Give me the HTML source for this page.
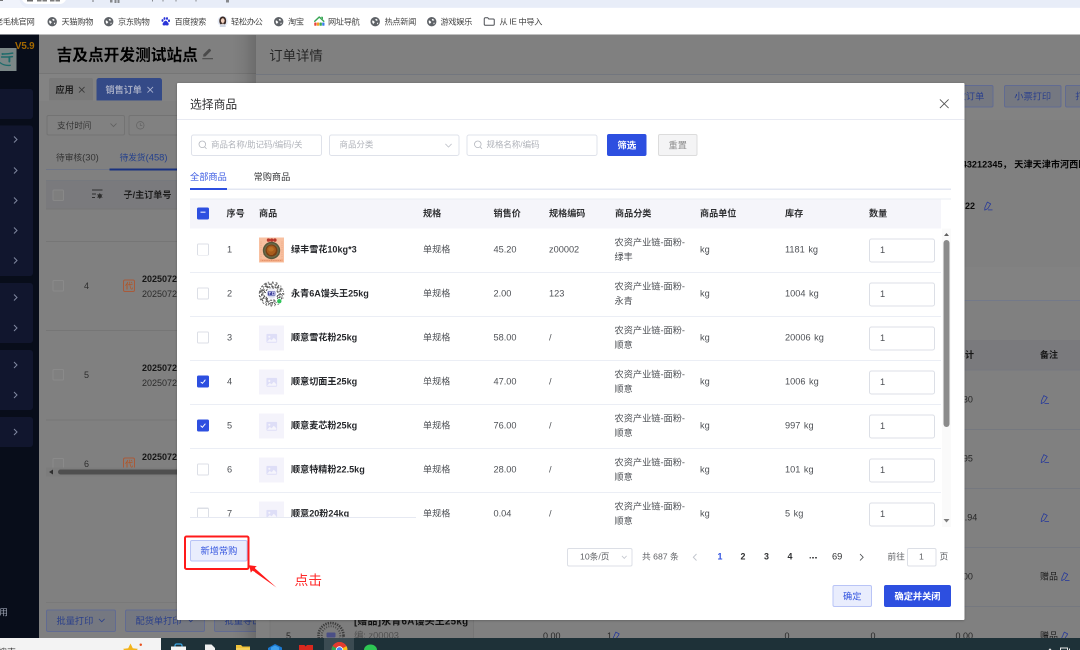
<!DOCTYPE html>
<html lang="zh-CN">
<head>
<meta charset="utf-8">
<title>选择商品</title>
<style>
*{box-sizing:border-box;margin:0;padding:0}
html,body{width:1080px;height:650px;overflow:hidden}
body{position:relative;background:#808080;font-family:"Liberation Sans","Noto Sans CJK SC",sans-serif;font-size:9px;color:#1a1a1a;line-height:1}
.a{position:absolute}
.t{position:absolute;white-space:nowrap;line-height:12px;height:12px}
.b{font-weight:bold}
svg{position:absolute;overflow:visible}
#sc{position:absolute;left:0;top:0;width:2160px;height:1300px;transform:scale(.5);transform-origin:0 0;will-change:transform;overflow:hidden}
#pg{position:absolute;left:0;top:0;width:1080px;height:650px;zoom:2;overflow:hidden;background:#808080}

/* ---------- browser chrome ---------- */
#addr{left:0;top:0;width:1080px;height:8px;background:#f0f3fb;overflow:hidden}
#addr .bar{left:19.500px;top:-12px;width:1100px;height:19.300px;border-radius:9px;background:#e8edf8}
#addr .pill{left:21.500px;top:-10px;width:45px;height:14.200px;border-radius:7px;background:#fff}
#bm{left:0;top:8px;width:1080px;height:26.700px;background:#fff}
#bm .t{font-size:8.200px;color:#444;top:7.600px;letter-spacing:-0.3px}
.globe{position:absolute;top:8px;width:9px;height:9px;border-radius:50%;background:#5f6368}

/* ---------- sidebar ---------- */
#side{left:0;top:35px;width:39px;height:603px;background:#080d1a}
#side::before{content:"";position:absolute;left:0;top:-.3px;width:39px;height:.4px;background:#080d1a}
#side .blk{position:absolute;left:0;width:33px;background:#11162e;border-radius:0 3px 3px 0}
#side .chev{position:absolute;left:13px;width:5px;height:8px}

/* ---------- left panel ---------- */
#lp{left:39px;top:35px;width:217px;height:603px;background:#808080;overflow:hidden}

/* ---------- drawer ---------- */
#dr{left:256px;top:35px;width:824px;height:603px;background:#808080;overflow:hidden}
#drsh{left:232px;top:35px;width:24px;height:603px;background:linear-gradient(90deg,rgba(0,0,0,0) 0%,rgba(0,0,0,.05) 50%,rgba(0,0,0,.16) 100%)}

/* ---------- dialog ---------- */
#dlg{left:177px;top:83px;width:787.500px;height:537px;background:#fff;border-radius:1px;box-shadow:0 .5px 2.500px rgba(0,0,0,.28);overflow:hidden}
#dlg .t{color:#333}

/* ---------- taskbar ---------- */
#tb{left:0;top:638px;width:1080px;height:12px;background:#1e3138;overflow:hidden}
</style>
</head>
<body>
<div id="sc"><div id="pg">
<div id="addr" class="a"><div class="a bar"></div><div class="a pill"></div><div class="a" style="left:0px;top:0;width:3px;height:1.2px;background:#555;opacity:0.8"></div><div class="a" style="left:27px;top:0;width:6px;height:1.5px;background:#3a3a3a;opacity:0.75"></div><div class="a" style="left:37px;top:0;width:4.5px;height:1.5px;background:#444;opacity:0.7"></div><div class="a" style="left:42.5px;top:0;width:4.5px;height:1.5px;background:#444;opacity:0.7"></div><div class="a" style="left:50px;top:0;width:4.5px;height:1.5px;background:#444;opacity:0.7"></div><div class="a" style="left:55.5px;top:0;width:4.5px;height:1.5px;background:#444;opacity:0.7"></div><div class="a" style="left:92.5px;top:0;width:1px;height:2.2px;background:#444;opacity:0.7"></div><div class="a" style="left:110px;top:0;width:2.5px;height:2.5px;background:#444;opacity:0.6"></div><div class="a" style="left:114.5px;top:0;width:2px;height:2.8px;background:#444;opacity:0.6"></div><div class="a" style="left:117.5px;top:0;width:2px;height:2.8px;background:#444;opacity:0.6"></div><div class="a" style="left:152px;top:0;width:1px;height:1.6px;background:#444;opacity:0.6"></div><div class="a" style="left:162.5px;top:0;width:1px;height:1.6px;background:#444;opacity:0.6"></div><div class="a" style="left:175.5px;top:0;width:1px;height:1.6px;background:#444;opacity:0.6"></div><div class="a" style="left:195.5px;top:0;width:1px;height:1.6px;background:#444;opacity:0.6"></div><div class="a" style="left:226px;top:0;width:3px;height:2.6px;background:#444;opacity:0.6"></div></div>
<div id="bm" class="a">
<div class="t" style="left:-5px">老毛桃官网</div>
<svg style="left:47.5px;top:9px" width="9.4" height="9.4" viewBox="0 0 20 20"><circle cx="10" cy="10" r="10" fill="#5f6368"/><path d="M4 7.400c1.300-.2 2.300.3 2.800 1.200.6 1.100 1.900 1 2.100 2.200.2 1.200-1.100 1.700-1.800 2.500-.4.500-.3 1.300-.9 1.500-1.400-.9-2.500-2.800-2.600-4.900 0-.9.100-1.700.4-2.500zM11.500 4c1.800.3 3.300 1.300 4.200 2.900-.8.300-1.400.1-2 .7-.7.600-1.600.5-2.200-.2-.5-.6-1.400-.8-1.300-1.700.1-.8.800-1.200 1.300-1.700zM14.200 12.300c.8-.3 1.700-.1 2.400.3-.3 1.300-1.100 2.300-2.200 3-.4-.6-.2-1.400-.6-2-.3-.5-.1-1.100.4-1.300z" fill="#fff"/></svg>
<div class="t" style="left:61.5px">天猫购物</div>
<svg style="left:104px;top:9px" width="9.4" height="9.4" viewBox="0 0 20 20"><circle cx="10" cy="10" r="10" fill="#5f6368"/><path d="M4 7.400c1.300-.2 2.300.3 2.800 1.200.6 1.100 1.900 1 2.100 2.200.2 1.200-1.100 1.700-1.800 2.500-.4.500-.3 1.300-.9 1.500-1.400-.9-2.500-2.800-2.600-4.900 0-.9.100-1.700.4-2.500zM11.500 4c1.800.3 3.300 1.300 4.200 2.900-.8.300-1.400.1-2 .7-.7.600-1.600.5-2.200-.2-.5-.6-1.400-.8-1.300-1.700.1-.8.800-1.200 1.300-1.700zM14.200 12.300c.8-.3 1.700-.1 2.400.3-.3 1.300-1.100 2.300-2.200 3-.4-.6-.2-1.400-.6-2-.3-.5-.1-1.100.4-1.300z" fill="#fff"/></svg>
<div class="t" style="left:118px">京东购物</div>
<svg style="left:160.5px;top:8.5px" width="10" height="10" viewBox="0 0 20 20" fill="#2a34d8"><ellipse cx="4" cy="8" rx="2" ry="2.800"/><ellipse cx="8" cy="4" rx="2" ry="2.800"/><ellipse cx="13" cy="4" rx="2" ry="2.800"/><ellipse cx="17" cy="8.500" rx="2" ry="2.800"/><path d="M10.300 8.500c2.200 0 3 2.200 5 4 1.800 1.700 1.500 5.500-1.800 5.500-1.400 0-2.200-.5-3.200-.5s-2 .5-3.300.5c-3.300 0-3.500-3.800-1.700-5.500 2-1.800 2.800-4 5-4z"/></svg>
<div class="t" style="left:174.5px">百度搜索</div>
<svg style="left:217.500px;top:7.500px" width="10.500" height="11.500" viewBox="0 0 21 23"><circle cx="10.500" cy="11.500" r="10.500" fill="#e6ecf7"/><path d="M4 14c-1.500-7 1.500-12 6.500-12s8 5 6.500 12c-.5 2.500-2 4-3 4h-7c-1 0-2.500-1.500-3-4z" fill="#3b2a25"/><ellipse cx="10.500" cy="10.300" rx="3.700" ry="4.800" fill="#f3d2bf"/><path d="M4.500 23c0-4.500 2.500-6.500 6-6.500s6 2 6 6.500z" fill="#cfd6e2"/><path d="M8.800 16.300h3.400l-1.700 3z" fill="#f3d2bf"/></svg>
<div class="t" style="left:231px">轻松办公</div>
<svg style="left:274px;top:9px" width="9.4" height="9.4" viewBox="0 0 20 20"><circle cx="10" cy="10" r="10" fill="#5f6368"/><path d="M4 7.400c1.300-.2 2.300.3 2.800 1.200.6 1.100 1.900 1 2.100 2.200.2 1.200-1.100 1.700-1.800 2.500-.4.500-.3 1.300-.9 1.500-1.400-.9-2.500-2.800-2.600-4.900 0-.9.100-1.700.4-2.500zM11.500 4c1.800.3 3.300 1.300 4.200 2.900-.8.300-1.400.1-2 .7-.7.600-1.600.5-2.200-.2-.5-.6-1.400-.8-1.300-1.700.1-.8.800-1.200 1.300-1.700zM14.200 12.300c.8-.3 1.700-.1 2.400.3-.3 1.300-1.100 2.300-2.200 3-.4-.6-.2-1.400-.6-2-.3-.5-.1-1.100.4-1.300z" fill="#fff"/></svg>
<div class="t" style="left:288px">淘宝</div>
<svg style="left:313.500px;top:7.500px" width="11.500" height="11.500" viewBox="0 0 23 23" fill="none" stroke-linecap="round" stroke-linejoin="round"><path d="M2.500 11.500L11.500 3l9 8.500" stroke="#3aa757" stroke-width="3"/><path d="M15.500 3.500h2.500v3" stroke="#3aa757" stroke-width="2"/><rect x="1.500" y="14" width="4.600" height="6.500" rx="1.200" fill="#e8453c"/><rect x="6.800" y="14" width="4.600" height="6.500" rx="1.200" fill="#f4a020"/><rect x="12.100" y="14" width="4.600" height="6.500" rx="1.200" fill="#35a853"/><rect x="17.400" y="14" width="4.600" height="6.500" rx="1.200" fill="#3b7ded"/></svg>
<div class="t" style="left:328px">网址导航</div>
<svg style="left:370.5px;top:9px" width="9.4" height="9.4" viewBox="0 0 20 20"><circle cx="10" cy="10" r="10" fill="#5f6368"/><path d="M4 7.400c1.300-.2 2.300.3 2.800 1.200.6 1.100 1.900 1 2.100 2.200.2 1.200-1.100 1.700-1.800 2.500-.4.500-.3 1.300-.9 1.500-1.400-.9-2.500-2.800-2.600-4.900 0-.9.100-1.700.4-2.500zM11.500 4c1.800.3 3.300 1.300 4.200 2.900-.8.300-1.400.1-2 .7-.7.600-1.600.5-2.200-.2-.5-.6-1.400-.8-1.300-1.700.1-.8.800-1.200 1.300-1.700zM14.200 12.300c.8-.3 1.700-.1 2.400.3-.3 1.300-1.100 2.300-2.200 3-.4-.6-.2-1.400-.6-2-.3-.5-.1-1.100.4-1.300z" fill="#fff"/></svg>
<div class="t" style="left:384.5px">热点新闻</div>
<svg style="left:427px;top:9px" width="9.4" height="9.4" viewBox="0 0 20 20"><circle cx="10" cy="10" r="10" fill="#5f6368"/><path d="M4 7.400c1.300-.2 2.300.3 2.800 1.200.6 1.100 1.900 1 2.100 2.200.2 1.200-1.100 1.700-1.800 2.500-.4.500-.3 1.300-.9 1.500-1.400-.9-2.500-2.800-2.600-4.900 0-.9.100-1.700.4-2.500zM11.500 4c1.800.3 3.300 1.300 4.200 2.900-.8.300-1.400.1-2 .7-.7.600-1.600.5-2.200-.2-.5-.6-1.400-.8-1.300-1.700.1-.8.800-1.200 1.300-1.700zM14.200 12.300c.8-.3 1.700-.1 2.400.3-.3 1.300-1.100 2.300-2.200 3-.4-.6-.2-1.400-.6-2-.3-.5-.1-1.100.4-1.300z" fill="#fff"/></svg>
<div class="t" style="left:440.5px">游戏娱乐</div>
<svg style="left:483.500px;top:9px" width="11.500" height="9" viewBox="0 0 23 18" fill="none" stroke="#4a4d52" stroke-width="2"><path d="M1.500 3.500a2 2 0 0 1 2-2h5l2 2.500h9a2 2 0 0 1 2 2v8.500a2 2 0 0 1-2 2h-16a2 2 0 0 1-2-2z"/></svg>
<div class="t" style="left:499.5px">从 IE 中导入</div>
</div>
<div id="side" class="a">
<div class="blk" style="top:54px;height:30px"></div>
<div class="blk" style="top:90.5px;height:150.5px"></div>
<div class="blk" style="top:248px;height:60px"></div>
<div class="blk" style="top:315px;height:60px"></div>
<div class="blk" style="top:382px;height:30px"></div>
<svg class="chev" style="left:13px;top:100.5px" width="5" height="7" viewBox="0 0 5 7" fill="none" stroke="#8088a0" stroke-width="1"><path d="M1 .5l3 3-3 3"/></svg>
<svg class="chev" style="left:13px;top:131.5px" width="5" height="7" viewBox="0 0 5 7" fill="none" stroke="#8088a0" stroke-width="1"><path d="M1 .5l3 3-3 3"/></svg>
<svg class="chev" style="left:13px;top:161.5px" width="5" height="7" viewBox="0 0 5 7" fill="none" stroke="#8088a0" stroke-width="1"><path d="M1 .5l3 3-3 3"/></svg>
<svg class="chev" style="left:13px;top:191.5px" width="5" height="7" viewBox="0 0 5 7" fill="none" stroke="#8088a0" stroke-width="1"><path d="M1 .5l3 3-3 3"/></svg>
<svg class="chev" style="left:13px;top:221.5px" width="5" height="7" viewBox="0 0 5 7" fill="none" stroke="#8088a0" stroke-width="1"><path d="M1 .5l3 3-3 3"/></svg>
<svg class="chev" style="left:13px;top:258.5px" width="5" height="7" viewBox="0 0 5 7" fill="none" stroke="#8088a0" stroke-width="1"><path d="M1 .5l3 3-3 3"/></svg>
<svg class="chev" style="left:13px;top:289.0px" width="5" height="7" viewBox="0 0 5 7" fill="none" stroke="#8088a0" stroke-width="1"><path d="M1 .5l3 3-3 3"/></svg>
<svg class="chev" style="left:13px;top:326.0px" width="5" height="7" viewBox="0 0 5 7" fill="none" stroke="#8088a0" stroke-width="1"><path d="M1 .5l3 3-3 3"/></svg>
<svg class="chev" style="left:13px;top:356.0px" width="5" height="7" viewBox="0 0 5 7" fill="none" stroke="#8088a0" stroke-width="1"><path d="M1 .5l3 3-3 3"/></svg>
<svg class="chev" style="left:13px;top:393.0px" width="5" height="7" viewBox="0 0 5 7" fill="none" stroke="#8088a0" stroke-width="1"><path d="M1 .5l3 3-3 3"/></svg>
<div class="a" style="left:0;top:13px;width:16.500px;height:23px;background:#7b8787"></div>
<svg style="left:0;top:0px" width="17" height="40" viewBox="0 35 17 40" fill="none" stroke="#1f6b6b" stroke-width="1.500" stroke-linecap="round"><path d="M2.200 53.900c3.500.2 7-.1 10.500-.8"/><path d="M1.600 57c3.600.1 7.200 0 10.800-.4"/><path d="M9.400 57.300v4.200" stroke-width="1.900"/><path d="M0 62.600c2.500 2 6.500 3.200 10.300 2.700" stroke-width="1.300"/><circle cx="2.600" cy="54.200" r=".9" fill="#1f6b6b" stroke="none"/></svg>
<div class="t b" style="left:15px;top:4.7px;font-size:9.800px;color:#a36800;letter-spacing:-.2px">V5.9</div>
<div class="t" style="left:-1px;top:571.5px;font-size:9px;color:#9aa0b0">用</div>
</div>
<div id="lp" class="a">
<div class="t b" style="left:17.6px;top:9.8px;font-size:15.700px;line-height:21px;height:21px;color:#000">吉及点开发测试站点</div>
<svg style="left:163px;top:12.6px" width="11.300" height="12.400" viewBox="0 0 11 12"><path d="M1.200 8.800l.1-2.100 5.300-5.300a.8.800 0 0 1 1.100 0l.9.900a.8.800 0 0 1 0 1.100L3.300 8.700z" fill="#4a4a4a"/><rect x=".3" y="10.300" width="10.400" height="1.100" fill="#4a4a4a"/></svg>
<div class="a" style="left:0;top:38px;width:217px;height:1px;background:#767676"></div>
<div class="a" style="left:0;top:39px;width:217px;height:27px;background:#838383"></div>
<div class="a" style="left:10px;top:43px;width:44px;height:22.500px;background:#7a7a7a;border-radius:2px 2px 0 0"></div>
<div class="t b" style="left:16.5px;top:49px;font-size:9.100px;color:#1e1e1e">应用</div>
<svg style="left:39.5px;top:51.5px" width="6.500" height="6.500" viewBox="0 0 7 7" stroke="#3a3a3a" stroke-width=".9"><path d="M.5.5l6 6M6.500.5l-6 6"/></svg>
<div class="a" style="left:57.5px;top:43px;width:65.500px;height:22.500px;background:#344a87;border-radius:2.500px 2.500px 0 0"></div>
<div class="t b" style="left:66.5px;top:49px;font-size:9.100px;color:#a2a9c2">销售订单</div>
<svg style="left:108px;top:51.5px" width="6.500" height="6.500" viewBox="0 0 7 7" stroke="#a9b2d0" stroke-width=".9"><path d="M.5.5l6 6M6.500.5l-6 6"/></svg>
<div class="a" style="left:7.5px;top:80px;width:78.500px;height:20.500px;border:1px solid #737373;border-radius:2px;background:#818181"></div>
<div class="t" style="left:18px;top:84.5px;font-size:8.600px;color:#363636">支付时间</div>
<svg style="left:71px;top:88px" width="7" height="4.500" viewBox="0 0 7 4.500" fill="none" stroke="#5f5f5f" stroke-width=".8"><path d="M.5.5l3 3 3-3"/></svg>
<div class="a" style="left:89.5px;top:80px;width:120px;height:20.500px;border:1px solid #737373;border-radius:2px;background:#818181"></div>
<svg style="left:97px;top:86px" width="8.600" height="8.600" viewBox="0 0 8 8" fill="none" stroke="#666" stroke-width=".75"><circle cx="4" cy="4" r="3.500"/><path d="M4 2v2.200h1.800"/></svg>
<div class="t" style="left:17px;top:116.5px;font-size:8.700px;color:#333">待审核<span style="font-size:9.400px">(30)</span></div>
<div class="t" style="left:80.5px;top:116.5px;font-size:8.700px;color:#24408c">待发货<span style="font-size:9.400px">(458)</span></div>
<div class="a" style="left:7px;top:134px;width:210px;height:1px;background:#6f7585"></div>
<div class="a" style="left:70.5px;top:133.5px;width:150px;height:1.800px;background:#19327f"></div>
<div class="a" style="left:7px;top:145px;width:211px;height:29.500px;background:#7a7a7d;border-top:1px solid #76797e;border-bottom:1px solid #757575"></div>
<div class="a" style="left:13.5px;top:154.5px;width:11.500px;height:11.500px;border:1px solid #888;border-radius:1.500px;background:#7e7e7e"></div>
<svg style="left:52.5px;top:154px" width="11.500" height="10" viewBox="0 0 11.500 10" fill="none" stroke="#2e2e2e" stroke-width="1"><path d="M.5 1h10.500M.5 5h4M.5 8.500h3"/><circle cx="8.300" cy="7" r="2" fill="#2e2e2e" stroke="none"/><path d="M8.300 4v6M5.700 5.500l5.200 3M10.900 5.500l-5.200 3" stroke-width=".7"/></svg>
<div class="t b" style="left:84.5px;top:154px;font-size:9.100px;color:#1e1e1e">子/主订单号</div>
<div class="a" style="left:7px;top:206px;width:211px;height:1px;background:#767676"></div>
<div class="a" style="left:7px;top:295px;width:211px;height:1px;background:#767676"></div>
<div class="a" style="left:7px;top:384.5px;width:211px;height:1px;background:#767676"></div>
<div class="a" style="left:13.5px;top:245px;width:11.500px;height:11.500px;border:1px solid #8a8a8a;border-radius:1.500px;background:#808080"></div><div class="t" style="left:45px;top:245px;font-size:9px;color:#2c2c2c">4</div><div class="a" style="left:84px;top:244.5px;width:12px;height:12.500px;border:1px solid #a85a3a;border-radius:2px;background:#857f7c"></div><div class="t" style="left:86px;top:244.8px;font-size:8px;color:#b4511f">代</div><div class="t b" style="left:103px;top:237.8px;font-size:9px;color:#161616">20250729000</div><div class="t" style="left:103px;top:252.8px;font-size:9px;color:#2a2a2a">20250729000</div>
<div class="a" style="left:13.5px;top:334px;width:11.500px;height:11.500px;border:1px solid #8a8a8a;border-radius:1.500px;background:#808080"></div><div class="t" style="left:45px;top:334px;font-size:9px;color:#2c2c2c">5</div><div class="t b" style="left:103px;top:326.8px;font-size:9px;color:#161616">20250729000</div><div class="t" style="left:103px;top:341.8px;font-size:9px;color:#2a2a2a">20250729000</div>
<div class="a" style="left:0;top:395px;width:217px;height:37.500px;overflow:hidden"><div class="a" style="left:0;top:-395px;width:217px;height:600px"><div class="a" style="left:13.5px;top:423px;width:11.500px;height:11.500px;border:1px solid #8a8a8a;border-radius:1.500px;background:#808080"></div><div class="t" style="left:45px;top:423px;font-size:9px;color:#2c2c2c">6</div><div class="a" style="left:84px;top:422.5px;width:12px;height:12.500px;border:1px solid #a85a3a;border-radius:2px;background:#857f7c"></div><div class="t" style="left:86px;top:422.8px;font-size:8px;color:#b4511f">代</div><div class="t b" style="left:103px;top:415.8px;font-size:9px;color:#161616">20250729000</div><div class="t" style="left:103px;top:430.8px;font-size:9px;color:#2a2a2a">20250729000</div></div></div>
<div class="a" style="left:7px;top:432.5px;width:211px;height:9px;background:#7c7c7c"></div>
<svg style="left:10px;top:434.5px" width="4" height="5" viewBox="0 0 4 5"><path d="M4 0v5L0 2.500z" fill="#2f2f2f"/></svg>
<div class="a" style="left:19px;top:434.3px;width:220px;height:5.400px;border-radius:3px;background:#4f4f4f"></div>
<div class="a" style="left:7px;top:567px;width:211px;height:1px;background:#797979"></div>
<div class="a" style="left:7.2px;top:574.3px;width:70px;height:22.500px;border:1px solid #616b92;border-radius:2px;background:#757881"></div><div class="t" style="left:17.5px;top:580px;font-size:9.200px;color:#2a3f8a">批量打印</div>
<svg style="left:59.5px;top:583.5px" width="6.500" height="4" viewBox="0 0 6.500 4" fill="none" stroke="#2a3f8a" stroke-width=".8"><path d="M.4.4l2.850 2.900L6.100.4"/></svg>
<div class="a" style="left:86.2px;top:574.3px;width:80px;height:22.500px;border:1px solid #616b92;border-radius:2px;background:#757881"></div><div class="t" style="left:96.5px;top:580px;font-size:9.200px;color:#2a3f8a">配货单打印</div>
<svg style="left:148.5px;top:583.5px" width="6.500" height="4" viewBox="0 0 6.500 4" fill="none" stroke="#2a3f8a" stroke-width=".8"><path d="M.4.4l2.850 2.900L6.100.4"/></svg>
<div class="a" style="left:175.2px;top:574.3px;width:61px;height:22.500px;border:1px solid #616b92;border-radius:2px;background:#757881"></div><div class="t" style="left:185.5px;top:580px;font-size:9.200px;color:#2a3f8a">批量导出</div>
</div>
<div id="drsh" class="a"></div>
<div id="dr" class="a">
<div class="t" style="left:13.2px;top:11.8px;font-size:13.400px;line-height:18px;height:18px;color:#262626">订单详情</div>
<div class="a" style="left:0;top:39px;width:824px;height:1px;background:#72767e"></div>
<div class="a" style="left:0;top:40px;width:824px;height:45px;background:#828282"></div>
<div class="a" style="left:674px;top:50px;width:63.5px;height:22.500px;border:1px solid #616b92;border-radius:2px;background:#757881"></div><div class="t" style="left:682px;top:55.7px;font-size:9.200px;color:#2a3f8c"></div>
<div class="t" style="right:95.70000000000005px;top:55.7px;font-size:9.200px;color:#2a3f8c">修改订单</div>
<div class="a" style="left:748px;top:50px;width:57.5px;height:22.500px;border:1px solid #616b92;border-radius:2px;background:#757881"></div><div class="t" style="left:758.3px;top:55.7px;font-size:9.200px;color:#2a3f8c">小票打印</div>
<div class="a" style="left:809px;top:50px;width:60px;height:22.500px;border:1px solid #616b92;border-radius:2px;background:#757881"></div><div class="t" style="left:819.3px;top:55.7px;font-size:9.200px;color:#2a3f8c">打印配货单</div>
<div class="t b" style="left:690.4px;top:123.5px;font-size:9.100px;color:#050505;letter-spacing:.05px">13043212345， 天津天津市河西区</div>
<div class="t b" style="left:699px;top:165px;font-size:9px;color:#0c0c0c">0722</div>
<svg style="left:728px;top:166px" width="9" height="9.500" viewBox="0 0 9 9.500" fill="none" stroke="#27399a" stroke-width=".8" stroke-linejoin="round"><path d="M3.300 1.100L6.700 2.900L3.700 7.700L.7 9.100L.9 6.500Z"/><path d="M4 8.900h4.500"/></svg>
<div class="a" style="left:0;top:232px;width:824px;height:33px;background:#828282"></div>
<div class="a" style="left:0;top:265px;width:824px;height:1px;background:#737989"></div>
<div class="a" style="left:0;top:305px;width:824px;height:29.500px;background:#7a7a7d"></div>
<div class="t b" style="left:700px;top:314px;font-size:9px;color:#161616">小计</div>
<div class="t b" style="left:784px;top:314px;font-size:9px;color:#161616">备注</div>
<div class="a" style="left:0;top:334.5px;width:824px;height:1px;background:#75787f"></div>
<div class="a" style="left:0;top:394px;width:824px;height:1px;background:#75787f"></div>
<div class="a" style="left:0;top:453px;width:824px;height:1px;background:#75787f"></div>
<div class="a" style="left:0;top:512px;width:824px;height:1px;background:#75787f"></div>
<div class="a" style="left:0;top:571px;width:824px;height:1px;background:#75787f"></div>
<div class="t" style="left:699.4px;top:358.5px;font-size:9px;color:#262626">9.30</div>
<svg style="left:784.3px;top:359.5px" width="9" height="9.500" viewBox="0 0 9 9.500" fill="none" stroke="#27399a" stroke-width=".8" stroke-linejoin="round"><path d="M3.300 1.100L6.700 2.900L3.700 7.700L.7 9.100L.9 6.500Z"/><path d="M4 8.900h4.500"/></svg>
<div class="t" style="left:699.4px;top:417.5px;font-size:9px;color:#262626">3.95</div>
<svg style="left:784.3px;top:418.5px" width="9" height="9.500" viewBox="0 0 9 9.500" fill="none" stroke="#27399a" stroke-width=".8" stroke-linejoin="round"><path d="M3.300 1.100L6.700 2.900L3.700 7.700L.7 9.100L.9 6.500Z"/><path d="M4 8.900h4.500"/></svg>
<div class="t" style="left:699.4px;top:476.5px;font-size:9px;color:#262626">11.94</div>
<svg style="left:784.3px;top:477.5px" width="9" height="9.500" viewBox="0 0 9 9.500" fill="none" stroke="#27399a" stroke-width=".8" stroke-linejoin="round"><path d="M3.300 1.100L6.700 2.900L3.700 7.700L.7 9.100L.9 6.500Z"/><path d="M4 8.900h4.500"/></svg>
<div class="t" style="left:699.4px;top:535.5px;font-size:9px;color:#262626">0.00</div>
<div class="t" style="left:784px;top:535.5px;font-size:9px;color:#1c1c1c">赠品</div>
<svg style="left:805px;top:536.5px" width="9" height="9.500" viewBox="0 0 9 9.500" fill="none" stroke="#27399a" stroke-width=".8" stroke-linejoin="round"><path d="M3.300 1.100L6.700 2.900L3.700 7.700L.7 9.100L.9 6.500Z"/><path d="M4 8.900h4.500"/></svg>
<div class="a" style="left:13.5px;top:571.5px;width:204.500px;height:40px;background:#7d7d7d;border-left:1px solid #777;border-right:1px solid #767676"></div>
<div class="t" style="left:30px;top:595px;font-size:9px;color:#262626;">5</div>
<div class="t" style="left:287px;top:595px;font-size:9px;color:#262626;">0.00</div>
<div class="t" style="left:351px;top:595px;font-size:9px;color:#262626;">1</div>
<svg style="left:356.5px;top:596px" width="9" height="9.500" viewBox="0 0 9 9.500" fill="none" stroke="#27399a" stroke-width=".8" stroke-linejoin="round"><path d="M3.300 1.100L6.700 2.900L3.700 7.700L.7 9.100L.9 6.500Z"/><path d="M4 8.900h4.500"/></svg>
<div class="t" style="left:528.5px;top:595px;font-size:9px;color:#262626;">0</div>
<div class="t" style="left:614.5px;top:595px;font-size:9px;color:#262626;">0</div>
<div class="t" style="left:699.5px;top:595px;font-size:9px;color:#262626;">0.00</div>
<div class="t" style="left:784px;top:595px;font-size:9px;color:#262626;color:#1c1c1c">赠品</div>
<svg style="left:805px;top:596px" width="9" height="9.500" viewBox="0 0 9 9.500" fill="none" stroke="#27399a" stroke-width=".8" stroke-linejoin="round"><path d="M3.300 1.100L6.700 2.900L3.700 7.700L.7 9.100L.9 6.500Z"/><path d="M4 8.900h4.500"/></svg>
<div class="t b" style="left:98px;top:580px;font-size:9.800px;letter-spacing:.3px;color:#101010">[赠品]永青6A馒头王25kg</div>
<div class="t" style="left:98px;top:594.5px;font-size:9.300px;color:#505050">编: z00003</div>
<svg style="left:61px;top:586.5px" width="28" height="28" viewBox="0 0 28 28"><circle cx="14" cy="14" r="12.500" fill="none" stroke="#3c3c3c" stroke-width="2.600" stroke-dasharray="1.300 1.100"/><circle cx="14" cy="14" r="9.300" fill="none" stroke="#4a4a4a" stroke-width="2" stroke-dasharray="1 1.400"/><rect x="9.500" y="11" width="9" height="5" rx="1" fill="#4a4f86"/></svg>
</div>
<div id="dlg" class="a">
<div class="t" style="left:13px;top:13.1px;font-size:11.800px;line-height:17px;height:17px;color:#303133">选择商品</div>
<svg style="left:762.5px;top:16px" width="9.500" height="9.500" viewBox="0 0 9.500 9.500" stroke="#555" stroke-width=".9"><path d="M.4.4l8.700 8.700M9.100.4L.4 9.100"/></svg>
<div class="a" style="left:0;top:36px;width:788px;height:1px;background:#e8eaf2"></div>
<div class="a" style="left:14px;top:51.5px;width:131px;height:21.500px;border:1px solid #dfe2ea;border-radius:2.500px;background:#fff"></div><svg style="left:21.5px;top:57.5px" width="8.500" height="9" viewBox="0 0 8.500 9" fill="none" stroke="#b4b7be" stroke-width=".8"><circle cx="3.800" cy="3.800" r="3.300"/><path d="M6.200 6.400l1.800 2"/></svg><div class="t" style="left:34px;top:55.9px;font-size:8.45px;color:#b0b3ba">商品名称/助记码/编码/关</div>
<div class="a" style="left:152px;top:51.5px;width:130.5px;height:21.500px;border:1px solid #dfe2ea;border-radius:2.500px;background:#fff"></div><div class="t" style="left:162.5px;top:55.9px;font-size:8.45px;color:#b0b3ba">商品分类</div><svg style="left:268.0px;top:60.3px" width="7" height="4.300" viewBox="0 0 7 4.300" fill="none" stroke="#b9bcc4" stroke-width=".8"><path d="M.4.4l3.100 3.200L6.600.4"/></svg>
<div class="a" style="left:289.5px;top:51.5px;width:131px;height:21.500px;border:1px solid #dfe2ea;border-radius:2.500px;background:#fff"></div><svg style="left:297.0px;top:57.5px" width="8.500" height="9" viewBox="0 0 8.500 9" fill="none" stroke="#b4b7be" stroke-width=".8"><circle cx="3.800" cy="3.800" r="3.300"/><path d="M6.200 6.400l1.800 2"/></svg><div class="t" style="left:309.5px;top:55.9px;font-size:8.45px;color:#b0b3ba">规格名称/编码</div>
<div class="a" style="left:430px;top:51px;width:39.500px;height:22px;border-radius:2px;background:#2d4fe0"></div>
<div class="t b" style="left:440.5px;top:56.7px;font-size:9.2px;color:#fff">筛选</div>
<div class="a" style="left:481px;top:51px;width:39.500px;height:22px;border:1px solid #dcdcdc;border-radius:2px;background:#f4f4f5"></div>
<div class="t" style="left:491.5px;top:56.5px;font-size:9.2px;color:#8c8c8c">重置</div>
<div class="t" style="left:13px;top:87.8px;font-size:9.2px;color:#3c5be2">全部商品</div>
<div class="t" style="left:76.5px;top:87.8px;font-size:9.2px;color:#303133">常购商品</div>
<div class="a" style="left:13px;top:105.5px;width:761px;height:1.300px;background:#e3e7f2"></div>
<div class="a" style="left:13px;top:105px;width:37px;height:1.800px;background:#2d4fe0"></div>
<div class="a" style="left:13px;top:115.5px;width:761px;height:1px;background:#e9ecf3"></div>
<div class="a" style="left:13px;top:116.5px;width:751px;height:29px;background:#f5f5fa"></div>
<div class="a" style="left:20px;top:124.5px;width:12px;height:12px;border-radius:1.500px;background:#2d4fe0"></div>
<div class="a" style="left:23.7px;top:128.4px;width:4.600px;height:1.400px;background:#b4c1f7"></div>
<div class="t b" style="left:49.5px;top:124.3px;font-size:9.1px;color:#303133">序号</div>
<div class="t b" style="left:82px;top:124.3px;font-size:9.1px;color:#303133">商品</div>
<div class="t b" style="left:246px;top:124.3px;font-size:9.1px;color:#303133">规格</div>
<div class="t b" style="left:316.5px;top:124.3px;font-size:9.1px;color:#303133">销售价</div>
<div class="t b" style="left:372px;top:124.3px;font-size:9.1px;color:#303133">规格编码</div>
<div class="t b" style="left:438px;top:124.3px;font-size:9.1px;color:#303133">商品分类</div>
<div class="t b" style="left:523px;top:124.3px;font-size:9.1px;color:#303133">商品单位</div>
<div class="t b" style="left:608px;top:124.3px;font-size:9.1px;color:#303133">库存</div>
<div class="t b" style="left:692px;top:124.3px;font-size:9.1px;color:#303133">数量</div>
<div class="a" style="left:0;top:145.5px;width:765px;height:298.5px;overflow:hidden"><div class="a" style="left:0;top:-145.5px;width:788px;height:600px">
<div class="t" style="left:246px;top:160.5px;font-size:9.1px;color:#4e5156">单规格</div><div class="t" style="left:316.5px;top:160.5px;font-size:9.2px;color:#4e5156">45.20</div><div class="t" style="left:372px;top:160.5px;font-size:9.2px;color:#4e5156">z00002</div><div class="t" style="left:437.5px;top:153.6px;font-size:9.2px;color:#4e5156">农资产业链-面粉-</div><div class="t" style="left:437.5px;top:168.1px;font-size:9.1px;color:#4e5156">绿丰</div><div class="t" style="left:523px;top:160.5px;font-size:9.2px;color:#4e5156">kg</div><div class="t" style="left:608px;top:160.5px;font-size:9.2px;color:#4e5156;word-spacing:1px">1181 kg</div><div class="a" style="left:692px;top:155.5px;width:66px;height:24px;border:1px solid #dcdfe6;border-radius:2.500px;background:#fff"></div><div class="t" style="left:703px;top:161.0px;font-size:9.2px;color:#4e5156">1</div>
<div class="a" style="left:13px;top:189.0px;width:751px;height:1px;background:#ebeef5"></div>
<div class="t" style="left:246px;top:204.5px;font-size:9.1px;color:#4e5156">单规格</div><div class="t" style="left:316.5px;top:204.5px;font-size:9.2px;color:#4e5156">2.00</div><div class="t" style="left:372px;top:204.5px;font-size:9.2px;color:#4e5156">123</div><div class="t" style="left:437.5px;top:197.6px;font-size:9.2px;color:#4e5156">农资产业链-面粉-</div><div class="t" style="left:437.5px;top:212.1px;font-size:9.1px;color:#4e5156">永青</div><div class="t" style="left:523px;top:204.5px;font-size:9.2px;color:#4e5156">kg</div><div class="t" style="left:608px;top:204.5px;font-size:9.2px;color:#4e5156;word-spacing:1px">1004 kg</div><div class="a" style="left:692px;top:199.5px;width:66px;height:24px;border:1px solid #dcdfe6;border-radius:2.500px;background:#fff"></div><div class="t" style="left:703px;top:205.0px;font-size:9.2px;color:#4e5156">1</div>
<div class="a" style="left:13px;top:233.0px;width:751px;height:1px;background:#ebeef5"></div>
<div class="t" style="left:246px;top:248.5px;font-size:9.1px;color:#4e5156">单规格</div><div class="t" style="left:316.5px;top:248.5px;font-size:9.2px;color:#4e5156">58.00</div><div class="t" style="left:372px;top:248.5px;font-size:9.2px;color:#4e5156">/</div><div class="t" style="left:437.5px;top:241.6px;font-size:9.2px;color:#4e5156">农资产业链-面粉-</div><div class="t" style="left:437.5px;top:256.1px;font-size:9.1px;color:#4e5156">顺意</div><div class="t" style="left:523px;top:248.5px;font-size:9.2px;color:#4e5156">kg</div><div class="t" style="left:608px;top:248.5px;font-size:9.2px;color:#4e5156;word-spacing:1px">20006 kg</div><div class="a" style="left:692px;top:243.5px;width:66px;height:24px;border:1px solid #dcdfe6;border-radius:2.500px;background:#fff"></div><div class="t" style="left:703px;top:249.0px;font-size:9.2px;color:#4e5156">1</div>
<div class="a" style="left:13px;top:277.0px;width:751px;height:1px;background:#ebeef5"></div>
<div class="t" style="left:246px;top:292.5px;font-size:9.1px;color:#4e5156">单规格</div><div class="t" style="left:316.5px;top:292.5px;font-size:9.2px;color:#4e5156">47.00</div><div class="t" style="left:372px;top:292.5px;font-size:9.2px;color:#4e5156">/</div><div class="t" style="left:437.5px;top:285.6px;font-size:9.2px;color:#4e5156">农资产业链-面粉-</div><div class="t" style="left:437.5px;top:300.1px;font-size:9.1px;color:#4e5156">顺意</div><div class="t" style="left:523px;top:292.5px;font-size:9.2px;color:#4e5156">kg</div><div class="t" style="left:608px;top:292.5px;font-size:9.2px;color:#4e5156;word-spacing:1px">1006 kg</div><div class="a" style="left:692px;top:287.5px;width:66px;height:24px;border:1px solid #dcdfe6;border-radius:2.500px;background:#fff"></div><div class="t" style="left:703px;top:293.0px;font-size:9.2px;color:#4e5156">1</div>
<div class="a" style="left:13px;top:321.0px;width:751px;height:1px;background:#ebeef5"></div>
<div class="t" style="left:246px;top:336.5px;font-size:9.1px;color:#4e5156">单规格</div><div class="t" style="left:316.5px;top:336.5px;font-size:9.2px;color:#4e5156">76.00</div><div class="t" style="left:372px;top:336.5px;font-size:9.2px;color:#4e5156">/</div><div class="t" style="left:437.5px;top:329.6px;font-size:9.2px;color:#4e5156">农资产业链-面粉-</div><div class="t" style="left:437.5px;top:344.1px;font-size:9.1px;color:#4e5156">顺意</div><div class="t" style="left:523px;top:336.5px;font-size:9.2px;color:#4e5156">kg</div><div class="t" style="left:608px;top:336.5px;font-size:9.2px;color:#4e5156;word-spacing:1px">997 kg</div><div class="a" style="left:692px;top:331.5px;width:66px;height:24px;border:1px solid #dcdfe6;border-radius:2.500px;background:#fff"></div><div class="t" style="left:703px;top:337.0px;font-size:9.2px;color:#4e5156">1</div>
<div class="a" style="left:13px;top:365.0px;width:751px;height:1px;background:#ebeef5"></div>
<div class="t" style="left:246px;top:380.5px;font-size:9.1px;color:#4e5156">单规格</div><div class="t" style="left:316.5px;top:380.5px;font-size:9.2px;color:#4e5156">28.00</div><div class="t" style="left:372px;top:380.5px;font-size:9.2px;color:#4e5156">/</div><div class="t" style="left:437.5px;top:373.6px;font-size:9.2px;color:#4e5156">农资产业链-面粉-</div><div class="t" style="left:437.5px;top:388.1px;font-size:9.1px;color:#4e5156">顺意</div><div class="t" style="left:523px;top:380.5px;font-size:9.2px;color:#4e5156">kg</div><div class="t" style="left:608px;top:380.5px;font-size:9.2px;color:#4e5156;word-spacing:1px">101 kg</div><div class="a" style="left:692px;top:375.5px;width:66px;height:24px;border:1px solid #dcdfe6;border-radius:2.500px;background:#fff"></div><div class="t" style="left:703px;top:381.0px;font-size:9.2px;color:#4e5156">1</div>
<div class="a" style="left:13px;top:409.0px;width:751px;height:1px;background:#ebeef5"></div>
<div class="t" style="left:246px;top:424.5px;font-size:9.1px;color:#4e5156">单规格</div><div class="t" style="left:316.5px;top:424.5px;font-size:9.2px;color:#4e5156">0.04</div><div class="t" style="left:372px;top:424.5px;font-size:9.2px;color:#4e5156">/</div><div class="t" style="left:437.5px;top:417.6px;font-size:9.2px;color:#4e5156">农资产业链-面粉-</div><div class="t" style="left:437.5px;top:432.1px;font-size:9.1px;color:#4e5156">顺意</div><div class="t" style="left:523px;top:424.5px;font-size:9.2px;color:#4e5156">kg</div><div class="t" style="left:608px;top:424.5px;font-size:9.2px;color:#4e5156;word-spacing:1px">5 kg</div><div class="a" style="left:692px;top:419.5px;width:66px;height:24px;border:1px solid #dcdfe6;border-radius:2.500px;background:#fff"></div><div class="t" style="left:703px;top:425.0px;font-size:9.2px;color:#4e5156">1</div>
<div class="a" style="left:13px;top:453.0px;width:751px;height:1px;background:#ebeef5"></div>
</div></div>
<div class="a" style="left:0;top:145.5px;width:239px;height:289.0px;overflow:hidden;background:transparent"><div class="a" style="left:0;top:-145.5px;width:788px;height:600px">
<div class="a" style="left:20px;top:160.5px;width:12px;height:12px;border:1px solid #dcdfe6;border-radius:1.500px;background:#fff"></div><div class="t" style="left:50px;top:160.5px;font-size:9.2px;color:#4e5156">1</div><svg style="left:82px;top:154.5px" width="25" height="25" viewBox="0 0 25 25"><rect width="25" height="25" fill="#f8c0a0"/><rect x="1" y="21.800" width="23" height="2.200" fill="#f2a982"/><path d="M2 4v17M23 4v17" stroke="#e59a72" stroke-width=".6" stroke-dasharray="1 .8"/><path d="M3 22.900h19" stroke="#d98058" stroke-width=".6" stroke-dasharray=".9 .9"/><circle cx="9.500" cy="2.600" r="1.700" fill="#b7362a"/><circle cx="12.700" cy="2.600" r="1.700" fill="#b7362a"/><circle cx="15.900" cy="2.600" r="1.700" fill="#b7362a"/><circle cx="12.500" cy="13" r="8.700" fill="#56563a"/><circle cx="12.500" cy="13" r="7.300" fill="#6d6b49"/><circle cx="12.500" cy="13" r="6" fill="#7a3f14"/><circle cx="12.300" cy="12.600" r="4.600" fill="#a85c1c"/><ellipse cx="12" cy="11.800" rx="2.800" ry="2.200" fill="#bb7026"/></svg><div class="t b" style="left:114px;top:160.5px;font-size:9.1px;color:#26282c">绿丰雪花10kg*3</div>
<div class="a" style="left:20px;top:204.5px;width:12px;height:12px;border:1px solid #dcdfe6;border-radius:1.500px;background:#fff"></div><div class="t" style="left:50px;top:204.5px;font-size:9.2px;color:#4e5156">2</div><svg style="left:82px;top:198.5px" width="25" height="25" viewBox="0 0 25 25"><rect width="25" height="25" fill="#fff"/><circle cx="12.500" cy="12.500" r="6.3" fill="none" stroke="#4a4a4a" stroke-width="1" stroke-dasharray="2.12 3.63 2.12 2.48 2.12 3.63 1.06 1.24 2.12 2.48 3.17 3.73 1.06 1.24 2.12 2.48 1.06 1.24" transform="rotate(275 12.500 12.500)"/><circle cx="12.500" cy="12.500" r="7.5" fill="none" stroke="#4a4a4a" stroke-width="1" stroke-dasharray="3.17 1.43 2.12 2.48 2.12 3.63 3.17 1.43 2.12 1.33 2.12 1.33 1.06 1.24 1.06 1.24 2.12 1.33 2.12 2.48 2.12 3.63 1.06 3.54" transform="rotate(119 12.500 12.500)"/><circle cx="12.500" cy="12.500" r="8.7" fill="none" stroke="#4a4a4a" stroke-width="1" stroke-dasharray="3.17 2.58 2.12 1.33 3.17 1.43 2.12 2.48 2.12 3.63 1.06 2.39 1.06 1.24 2.12 2.48 1.06 1.24 2.12 1.33 2.12 1.33 1.06 2.39 1.06 1.24 3.17 1.43" transform="rotate(109 12.500 12.500)"/><circle cx="12.500" cy="12.500" r="9.9" fill="none" stroke="#4a4a4a" stroke-width="1" stroke-dasharray="1.06 1.24 2.12 2.48 3.17 2.58 2.12 1.33 2.12 1.33 3.17 2.58 1.06 1.24 1.06 2.39 1.06 2.39 1.06 1.24 1.06 1.24 1.06 1.24 2.12 2.48 1.06 3.54 1.06 2.39 2.12 1.33 3.17 1.43" transform="rotate(214 12.500 12.500)"/><circle cx="12.500" cy="12.500" r="11.1" fill="none" stroke="#4a4a4a" stroke-width="1" stroke-dasharray="3.17 2.58 1.06 2.39 2.12 1.33 1.06 2.39 2.12 2.48 1.06 1.24 1.06 2.39 2.12 3.63 1.06 1.24 1.06 1.24 2.12 2.48 1.06 3.54 1.06 2.39 2.12 1.33 1.06 1.24 1.06 3.54 3.17 1.43 1.06 3.54" transform="rotate(188 12.500 12.500)"/><circle cx="12.500" cy="12.500" r="12.2" fill="none" stroke="#666" stroke-width="1" stroke-dasharray="1.06 3.54 2.12 1.33 2.12 2.48 2.12 1.33 2.12 1.33 3.17 1.43 1.06 1.24 2.12 1.33 3.17 1.43 1.06 3.54 1.06 2.39 2.12 3.63 1.06 2.39 1.06 1.24 1.06 1.24 2.12 2.48 1.06 2.39 1.06 2.39 2.12 2.48 1.06 3.54" transform="rotate(89 12.500 12.500)"/><circle cx="12.500" cy="12.300" r="5.300" fill="#f1f2fb"/><rect x="8.700" y="9.900" width="7.600" height="4.200" rx=".6" fill="#43479e"/><path d="M9.600 11.200h2.300M10.700 10.500v2.800M13.300 10.700h2.200v2.400h-2.200z" stroke="#e8e9ff" stroke-width=".55" fill="none"/><path d="M9.500 15.400h6" stroke="#a3a8cc" stroke-width=".5"/><circle cx="20.300" cy="19.700" r="2.800" fill="#fff"/><circle cx="20.300" cy="19.700" r="2.200" fill="#2fc45a"/></svg><div class="t b" style="left:114px;top:204.5px;font-size:9.1px;color:#26282c">永青6A馒头王25kg</div>
<div class="a" style="left:20px;top:248.5px;width:12px;height:12px;border:1px solid #dcdfe6;border-radius:1.500px;background:#fff"></div><div class="t" style="left:50px;top:248.5px;font-size:9.2px;color:#4e5156">3</div><div class="a" style="left:82px;top:242.5px;width:25px;height:25px;background:#f4f3fb"></div><svg style="left:88.8px;top:250.3px" width="11.500" height="9.600" viewBox="0 0 11.500 9.600"><rect x=".4" y=".4" width="10.700" height="8.800" rx=".9" fill="#dedef7"/><circle cx="3.300" cy="3.200" r="1" fill="#f6f5fc"/><path d="M1.200 8l2.600-2.600 1.700 1.500 2.300-2.700 2.500 2.500v1.500H1.200z" fill="#f6f5fc"/></svg><div class="t b" style="left:114px;top:248.5px;font-size:9.1px;color:#26282c">顺意雪花粉25kg</div>
<div class="a" style="left:20px;top:292.5px;width:12px;height:12px;border-radius:1.500px;background:#2d4fe0"></div><svg style="left:22.5px;top:295.5px" width="7" height="6" viewBox="0 0 7 6" fill="none" stroke="#fff" stroke-width=".95"><path d="M1.100 3.100l1.800 1.700L5.900 1.200"/></svg><div class="t" style="left:50px;top:292.5px;font-size:9.2px;color:#4e5156">4</div><div class="a" style="left:82px;top:286.5px;width:25px;height:25px;background:#f4f3fb"></div><svg style="left:88.8px;top:294.3px" width="11.500" height="9.600" viewBox="0 0 11.500 9.600"><rect x=".4" y=".4" width="10.700" height="8.800" rx=".9" fill="#dedef7"/><circle cx="3.300" cy="3.200" r="1" fill="#f6f5fc"/><path d="M1.200 8l2.600-2.600 1.700 1.500 2.300-2.700 2.500 2.500v1.500H1.200z" fill="#f6f5fc"/></svg><div class="t b" style="left:114px;top:292.5px;font-size:9.1px;color:#26282c">顺意切面王25kg</div>
<div class="a" style="left:20px;top:336.5px;width:12px;height:12px;border-radius:1.500px;background:#2d4fe0"></div><svg style="left:22.5px;top:339.5px" width="7" height="6" viewBox="0 0 7 6" fill="none" stroke="#fff" stroke-width=".95"><path d="M1.100 3.100l1.800 1.700L5.900 1.200"/></svg><div class="t" style="left:50px;top:336.5px;font-size:9.2px;color:#4e5156">5</div><div class="a" style="left:82px;top:330.5px;width:25px;height:25px;background:#f4f3fb"></div><svg style="left:88.8px;top:338.3px" width="11.500" height="9.600" viewBox="0 0 11.500 9.600"><rect x=".4" y=".4" width="10.700" height="8.800" rx=".9" fill="#dedef7"/><circle cx="3.300" cy="3.200" r="1" fill="#f6f5fc"/><path d="M1.200 8l2.600-2.600 1.700 1.500 2.300-2.700 2.500 2.500v1.500H1.200z" fill="#f6f5fc"/></svg><div class="t b" style="left:114px;top:336.5px;font-size:9.1px;color:#26282c">顺意麦芯粉25kg</div>
<div class="a" style="left:20px;top:380.5px;width:12px;height:12px;border:1px solid #dcdfe6;border-radius:1.500px;background:#fff"></div><div class="t" style="left:50px;top:380.5px;font-size:9.2px;color:#4e5156">6</div><div class="a" style="left:82px;top:374.5px;width:25px;height:25px;background:#f4f3fb"></div><svg style="left:88.8px;top:382.3px" width="11.500" height="9.600" viewBox="0 0 11.500 9.600"><rect x=".4" y=".4" width="10.700" height="8.800" rx=".9" fill="#dedef7"/><circle cx="3.300" cy="3.200" r="1" fill="#f6f5fc"/><path d="M1.200 8l2.600-2.600 1.700 1.500 2.300-2.700 2.500 2.500v1.500H1.200z" fill="#f6f5fc"/></svg><div class="t b" style="left:114px;top:380.5px;font-size:9.1px;color:#26282c">顺意特精粉22.5kg</div>
<div class="a" style="left:20px;top:424.5px;width:12px;height:12px;border:1px solid #dcdfe6;border-radius:1.500px;background:#fff"></div><div class="t" style="left:50px;top:424.5px;font-size:9.2px;color:#4e5156">7</div><div class="a" style="left:82px;top:418.5px;width:25px;height:25px;background:#f4f3fb"></div><svg style="left:88.8px;top:426.3px" width="11.500" height="9.600" viewBox="0 0 11.500 9.600"><rect x=".4" y=".4" width="10.700" height="8.800" rx=".9" fill="#dedef7"/><circle cx="3.300" cy="3.200" r="1" fill="#f6f5fc"/><path d="M1.200 8l2.600-2.600 1.700 1.500 2.300-2.700 2.500 2.500v1.500H1.200z" fill="#f6f5fc"/></svg><div class="t b" style="left:114px;top:424.5px;font-size:9.1px;color:#26282c">顺意20粉24kg</div>
</div></div>
<div class="a" style="left:13px;top:434px;width:226px;height:1px;background:#e6e9f2"></div>
<div class="a" style="left:13px;top:434.8px;width:226px;height:9.500px;background:#fff"></div>
<div class="a" style="left:765px;top:145.5px;width:9px;height:298.5px;background:#fafafa"></div>
<svg style="left:766.5px;top:149.5px" width="6" height="3.500" viewBox="0 0 6 3.500"><path d="M.5 3.500h5L3 .5z" fill="#606060"/></svg>
<div class="a" style="left:766.5px;top:157px;width:6.200px;height:187px;border-radius:3.100px;background:#8b8b8b"></div>
<svg style="left:766.5px;top:436px" width="6" height="3.500" viewBox="0 0 6 3.500"><path d="M0 0h6L3 3.500z" fill="#7d7d7d"/></svg>
<div class="a" style="left:13px;top:457px;width:57.500px;height:21.500px;border:1px solid #b9c4f6;border-radius:2px;background:#e9edfd"></div>
<div class="t" style="left:23.5px;top:462.1px;font-size:9.2px;color:#3556df">新增常购</div>
<div class="a" style="left:390px;top:465px;width:65.500px;height:18.500px;border:1px solid #dcdfe6;border-radius:2px;background:#fff"></div>
<div class="t" style="left:403px;top:467.6px;font-size:8.7px;color:#606266">10条/页</div>
<svg style="left:444.5px;top:472.5px" width="5.500" height="3.500" viewBox="0 0 5.500 3.500" fill="none" stroke="#c0c4cc" stroke-width=".8"><path d="M.4.4l2.350 2.500L5.100.4"/></svg>
<div class="t" style="left:465px;top:467.6px;font-size:8.7px;color:#606266">共 687 条</div>
<svg style="left:515.5px;top:470.5px" width="4.500" height="7.500" viewBox="0 0 4.500 7.500" fill="none" stroke="#c0c4cc" stroke-width=".9"><path d="M4 .5L.8 3.750 4 7"/></svg>
<div class="t b" style="left:540.5px;top:467.6px;font-size:8.9px;color:#2d4fe0">1</div>
<div class="t b" style="left:563.5px;top:467.6px;font-size:8.9px;color:#303133">2</div>
<div class="t b" style="left:587px;top:467.6px;font-size:8.9px;color:#303133">3</div>
<div class="t b" style="left:610.5px;top:467.6px;font-size:8.9px;color:#303133">4</div>
<div class="t b" style="left:655px;top:467.6px;font-size:8.9px;color:#303133;font-weight:normal;font-size:9.300px">69</div>
<div class="a" style="left:632.4px;top:473.9px;width:1.800px;height:1.800px;border-radius:50%;background:#303133"></div>
<div class="a" style="left:635.2px;top:473.9px;width:1.800px;height:1.800px;border-radius:50%;background:#303133"></div>
<div class="a" style="left:638.0px;top:473.9px;width:1.800px;height:1.800px;border-radius:50%;background:#303133"></div>
<svg style="left:682.5px;top:470.5px" width="4.500" height="7.500" viewBox="0 0 4.500 7.500" fill="none" stroke="#44464a" stroke-width=".8"><path d="M.5.5l3.200 3.250L.5 7"/></svg>
<div class="t" style="left:710.5px;top:467.6px;font-size:8.7px;color:#606266">前往</div>
<div class="a" style="left:730px;top:465px;width:29.500px;height:18.500px;border:1px solid #dcdfe6;border-radius:2px;background:#fff"></div>
<div class="t" style="left:742px;top:467.6px;font-size:8.7px;color:#606266">1</div>
<div class="t" style="left:762.5px;top:467.6px;font-size:8.7px;color:#606266">页</div>
<div class="a" style="left:655.5px;top:502px;width:39.500px;height:22px;border:1px solid #b9c4f6;border-radius:2px;background:#e9edfd"></div>
<div class="t" style="left:666px;top:507.3px;font-size:9.2px;color:#3556df">确定</div>
<div class="a" style="left:707px;top:502px;width:67px;height:22px;border-radius:2px;background:#2d4fe0"></div>
<div class="t b" style="left:717.5px;top:507.3px;font-size:9.2px;color:#fff">确定并关闭</div>
</div>
<div id="anno">
<div class="a" style="left:184px;top:535.500px;width:65.500px;height:34.300px;border:2px solid #ff1a1a;border-radius:2.500px"></div>
<svg style="left:0;top:0" width="1080" height="650" viewBox="0 0 1080 650"><path d="M249.200 565.200L256.800 566.300L254.600 568L276.600 587.600L252.600 570.600L250.800 572.600Z" fill="#ff1a1a"/></svg>
<div class="t" style="left:294.500px;top:571.700px;font-size:13.800px;line-height:18px;height:18px;color:#ff2a2a">点击</div>
</div>
<div id="tb" class="a">
<div class="a" style="left:0;top:0;width:161px;height:12px;background:#f3f3f3"></div>
<div class="t" style="left:-2px;top:8.300px;font-size:9px;color:#333">搜索</div>
<svg style="left:123px;top:5.600px" width="15" height="14" viewBox="0 0 15 14"><path d="M7.500 0l2.300 4.700 5.200.7-3.800 3.600.9 5.100-4.600-2.500-4.600 2.500.9-5.100L0 5.400l5.200-.7z" fill="#f2b41c"/></svg>
<div class="a" style="left:139.500px;top:5.500px;width:2.400px;height:2.400px;border-radius:50%;background:#e8501c"></div>
<svg style="left:171px;top:5.500px" width="15" height="12" viewBox="0 0 15 12"><path d="M4 3.500V2a1.500 1.500 0 0 1 1.500-1.500h4A1.500 1.500 0 0 1 11 2v1.500" fill="none" stroke="#39a7e6" stroke-width="1.200"/><rect x="0" y="3" width="15" height="9" fill="#f4f4f4"/></svg>
<svg style="left:205px;top:6.500px" width="10" height="8" viewBox="0 0 10 8"><path d="M0 0h6.500L10 3.500V8H0z" fill="#f0f0f0"/></svg>
<svg style="left:236px;top:7.200px" width="14" height="8" viewBox="0 0 14 8"><path d="M0 0h5l1.500 1.500H14V8H0z" fill="#f0c23a"/><rect x="0" y="3" width="14" height="5" fill="#f5d05a"/></svg>
<svg style="left:268px;top:6px" width="14" height="8" viewBox="0 0 14 8"><path d="M7 0l7 3.500V8H0V4z" fill="#1b78d0"/><path d="M7 1.500l4 2v4.500H3V3.500z" fill="#3ea0ee"/></svg>
<svg style="left:299px;top:7px" width="14" height="7" viewBox="0 0 14 7"><path d="M0 0h5.500l1 1.500L8 0h6v7H0z" fill="#d9281e"/></svg>
<div class="a" style="left:324px;top:0;width:30px;height:12px;background:#3b4b52"></div>
<svg style="left:331.500px;top:4px" width="16" height="16" viewBox="0 0 16 16"><circle cx="8" cy="8" r="8" fill="#e33b2e"/><path d="M8 8L1.100 4A8 8 0 0 0 8 16z" fill="#2da94f"/><path d="M8 8l6.900-4A8 8 0 0 1 8 16z" fill="#fbc116"/><path d="M1.100 4A8 8 0 0 1 14.900 4L8 8z" fill="#e33b2e"/><circle cx="8" cy="8" r="3.700" fill="#fff"/><circle cx="8" cy="8" r="2.900" fill="#4688f1"/></svg>
<svg style="left:364px;top:6.300px" width="13" height="10" viewBox="0 0 13 10"><ellipse cx="6.500" cy="5.500" rx="6.500" ry="5.500" fill="#2dc653"/></svg>
<svg style="left:1046.500px;top:10px" width="7" height="5" viewBox="0 0 7 5" fill="none" stroke="#e8e8e8" stroke-width="1"><path d="M.5 4.500l3-3.500 3 3.500"/></svg>
<svg style="left:1060px;top:9.500px" width="10" height="6" viewBox="0 0 10 6" fill="none" stroke="#e8e8e8" stroke-width="1"><path d="M.5 6V.5h7V6M9.500 1v5"/></svg>
</div>
</div></div>
</body>
</html>
